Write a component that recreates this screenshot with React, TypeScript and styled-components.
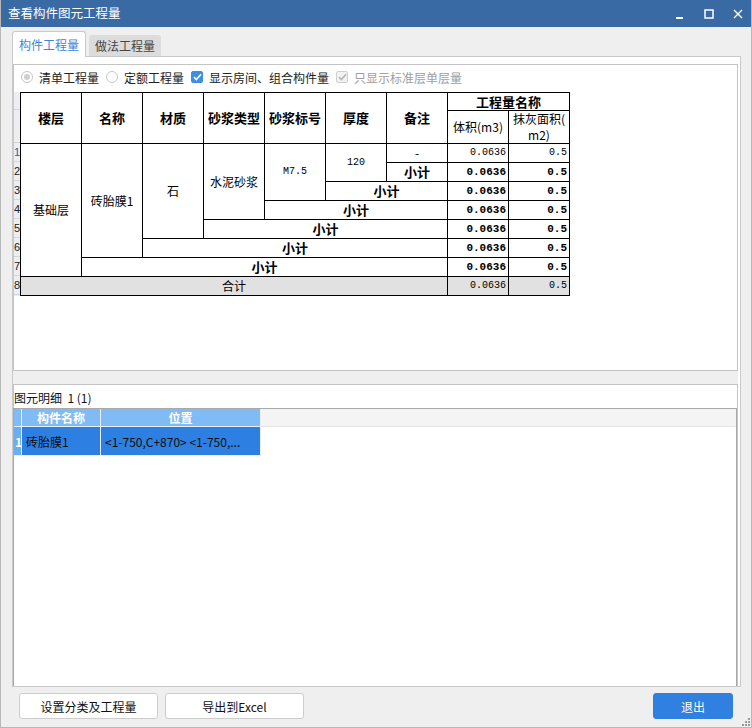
import * as React from "react";
import styled, { createGlobalStyle } from "styled-components";

const GlobalStyle = createGlobalStyle`
  html, body {
    margin: 0;
    padding: 0;
    background: #efefef;
  }
  * {
    box-sizing: border-box;
  }
`;

const CJK = `"Noto Sans CJK SC", "Noto Sans", sans-serif`;
const MONO = `"Liberation Mono", "DejaVu Sans Mono", monospace`;

const Window = styled.div`
  width: 752px;
  height: 728px;
  display: flex;
  flex-direction: column;
  background: #efefef;
  border: 1px solid #b8b8b8;
  border-top: none;
  font-family: ${CJK};
  font-size: 12px;
  color: #111;
  position: relative;
  overflow: hidden;
`;

const TitleBar = styled.div`
  height: 27px;
  flex: none;
  display: flex;
  align-items: center;
  background: #3a6aa4;
  color: #fff;
  padding-left: 8px;
  margin: 0 -1px;
`;

const TitleText = styled.div`
  flex: 1;
  font-size: 12.5px;
  line-height: 1;
`;

const TitleButton = styled.div`
  width: 29px;
  height: 27px;
  display: flex;
  align-items: center;
  justify-content: center;
`;

const Body = styled.div`
  flex: 1;
  display: flex;
  flex-direction: column;
  padding: 4px 10px 0 11px;
`;

const TabBar = styled.div`
  height: 26px;
  display: flex;
  align-items: flex-end;
  margin-bottom: -1px;
  position: relative;
  z-index: 1;
`;

const Tab = styled.div<{ $active?: boolean }>`
  display: flex;
  align-items: center;
  justify-content: center;
  border-radius: 3px 3px 0 0;
  font-size: 12px;
  ${(p) =>
    p.$active
      ? `
    width: 74px;
    height: 26px;
    background: #fff;
    color: #3b86db;
    border: 1px solid #c9c9c9;
    border-bottom: none;
  `
      : `
    width: 72px;
    height: 21px;
    margin-left: 3px;
    margin-bottom: 1px;
    background: #dcdcdc;
    color: #444;
  `}
`;

const TabPage = styled.div`
  height: 631px;
  flex: none;
  display: flex;
  flex-direction: column;
  background: #fff;
  border: 1px solid #c9c9c9;
  padding: 7px 2px 0 0;
`;

const UpperPanel = styled.div`
  height: 307px;
  flex: none;
  border: 1px solid #c4c4c4;
  display: flex;
  flex-direction: column;
`;

const OptionsRow = styled.div`
  height: 27px;
  flex: none;
  display: flex;
  align-items: center;
  padding-left: 7px;
  padding-bottom: 3px;
`;

const Option = styled.label<{ $disabled?: boolean }>`
  display: flex;
  align-items: center;
  gap: 6px;
  margin-right: 7px;
  color: ${(p) => (p.$disabled ? "#a0a0a0" : "#222")};
  font-size: 12px;
`;

const Radio = styled.span<{ $checked?: boolean }>`
  width: 12px;
  height: 12px;
  border-radius: 50%;
  border: 1px solid #c6c6c6;
  background: #fff;
  display: flex;
  align-items: center;
  justify-content: center;
  &::after {
    content: "";
    width: 6px;
    height: 6px;
    border-radius: 50%;
    background: ${(p) => (p.$checked ? "#cfcfcf" : "transparent")};
  }
`;

const Check = styled.span<{ $disabled?: boolean }>`
  width: 12px;
  height: 12px;
  border-radius: 2px;
  display: flex;
  align-items: center;
  justify-content: center;
  background: ${(p) => (p.$disabled ? "#f2f2f2" : "#3d8ee8")};
  border: 1px solid ${(p) => (p.$disabled ? "#cfcfcf" : "#3d8ee8")};
`;

const GridArea = styled.div`
  display: flex;
`;

const RowHeader = styled.div`
  width: 7px;
  flex: none;
  display: flex;
  flex-direction: column;
  background: #eceef2;
  border-left: 1px solid #c8c8c8;
  margin-left: -1px;
  position: relative;
  z-index: 1;
`;

const RowNum = styled.div<{ $h: number; $blue?: boolean }>`
  height: ${(p) => p.$h}px;
  border-bottom: 1px solid #d6d6d6;
  font-family: "Liberation Sans", sans-serif;
  font-size: 11px;
  line-height: ${(p) => p.$h}px;
  color: ${(p) => (p.$blue ? "#2a5ca8" : "#222")};
  overflow: visible;
  white-space: nowrap;
`;

const Sheet = styled.table`
  border-collapse: collapse;
  table-layout: fixed;
  width: 550px;
  font-family: ${CJK};
`;

const Col = styled.col`
  width: 61px;
`;

const Row = styled.tr<{ $h: number; $gray?: boolean }>`
  height: ${(p) => p.$h}px;
  background: ${(p) => (p.$gray ? "#e1e1e1" : "#fff")};
`;

const Head = styled.th<{ $thin?: boolean }>`
  border: 1px solid #000;
  padding: 0;
  font-size: ${(p) => (p.$thin ? "12px" : "13px")};
  font-weight: ${(p) => (p.$thin ? 400 : 700)};
  line-height: 16px;
  text-align: center;
  vertical-align: middle;
  color: #000;
  white-space: nowrap;
`;

const Cell = styled.td<{ $bold?: boolean; $mono?: boolean }>`
  border: 1px solid #000;
  padding: 0 2px;
  text-align: center;
  vertical-align: middle;
  line-height: 16px;
  white-space: nowrap;
  overflow: hidden;
  color: #000;
  font-family: ${(p) => (p.$mono ? MONO : CJK)};
  font-size: ${(p) => (p.$mono ? "10px" : p.$bold ? "13px" : "12px")};
  font-weight: ${(p) => (p.$bold ? 700 : 400)};
`;

const Num = styled.td<{ $bold?: boolean }>`
  border: 1px solid #000;
  padding: 0 2px 0 0;
  text-align: right;
  vertical-align: middle;
  line-height: 16px;
  color: #000;
  font-family: ${MONO};
  font-size: ${(p) => (p.$bold ? "11px" : "10px")};
  font-weight: ${(p) => (p.$bold ? 700 : 400)};
`;

const Splitter = styled.div`
  height: 13px;
  flex: none;
  background: #efefef;
`;

const LowerPanel = styled.div`
  flex: 1;
  display: flex;
  flex-direction: column;
  border: 1px solid #c4c4c4;
  border-bottom: none;
`;

const PanelLabel = styled.div`
  height: 23px;
  flex: none;
  display: flex;
  align-items: center;
  font-size: 12px;
  color: #111;
  padding-top: 1px;
`;

const DetailGrid = styled.div`
  flex: 1;
  display: flex;
  flex-direction: column;
  border: 1px solid #a9a9a9;
  border-bottom: none;
  margin-left: -1px;
`;

const GridRow = styled.div<{ $h: number }>`
  height: ${(p) => p.$h}px;
  display: flex;
`;

const GridCell = styled.div<{ $w?: number; $kind: "head" | "sel" | "num" | "numSel" | "blank" | "blankHead" }>`
  ${(p) => (p.$w ? `width: ${p.$w}px; flex: none;` : "flex: 1;")}
  display: flex;
  align-items: center;
  overflow: hidden;
  white-space: nowrap;
  font-size: 12px;
  border-right: 1px solid ${(p) => (p.$kind === "blank" || p.$kind === "blankHead" ? "transparent" : "#e6f1fc")};
  border-bottom: 1px solid ${(p) => (p.$kind === "blank" ? "transparent" : "#e6f1fc")};
  ${(p) => {
    switch (p.$kind) {
      case "head":
        return `background: #80bbf5; color: #fff; font-weight: 700; justify-content: center;`;
      case "sel":
        return `background: #2d80e2; color: #0c0c0c; padding-left: 4px;`;
      case "num":
        return `background: #80bbf5; color: #fff;`;
      case "numSel":
        return `background: #6aaef2; color: #fff; font-weight: 700; padding-left: 1px;`;
      case "blankHead":
        return `background: #f4f4f4; border-bottom-color: #e4e4e4;`;
      default:
        return `background: #fff;`;
    }
  }}
`;

const Footer = styled.div`
  height: 40px;
  flex: none;
  display: flex;
  align-items: flex-start;
  padding: 6px 8px 0 7px;
  gap: 7px;
`;

const Button = styled.div<{ $primary?: boolean }>`
  width: ${(p) => (p.$primary ? 80 : 139)}px;
  height: 26px;
  display: flex;
  align-items: center;
  justify-content: center;
  border-radius: 3px;
  font-size: 12px;
  background: ${(p) => (p.$primary ? "#2f80e0" : "#fff")};
  color: ${(p) => (p.$primary ? "#fff" : "#111")};
  border: 1px solid ${(p) => (p.$primary ? "#2f80e0" : "#cdcdcd")};
  ${(p) => (p.$primary ? "margin-left: auto;" : "")}
`;

const Grip = styled.svg`
  position: absolute;
  right: 1px;
  bottom: 1px;
`;

const CheckMark = ({ color }: { color: string }) => (
  <svg width="9" height="8" viewBox="0 0 9 8">
    <path d="M1 4.2 L3.4 6.5 L8 1.2" fill="none" stroke={color} strokeWidth="1.6" />
  </svg>
);

const subtotalRows = [2, 3, 4, 5, 6];

export default function App() {
  return (
    <>
      <GlobalStyle />
      <Window>
        <TitleBar>
          <TitleText>查看构件图元工程量</TitleText>
          <TitleButton>
            <svg width="10" height="10" viewBox="0 0 10 10">
              <rect x="1" y="8" width="7" height="2" fill="#fff" />
            </svg>
          </TitleButton>
          <TitleButton>
            <svg width="10" height="10" viewBox="0 0 10 10">
              <rect x="1" y="1" width="8" height="8" fill="none" stroke="#fff" strokeWidth="1.5" />
            </svg>
          </TitleButton>
          <TitleButton>
            <svg width="10" height="10" viewBox="0 0 10 10">
              <path d="M1 1 L9 9 M9 1 L1 9" stroke="#fff" strokeWidth="1.4" />
            </svg>
          </TitleButton>
        </TitleBar>

        <Body>
          <TabBar>
            <Tab $active>构件工程量</Tab>
            <Tab>做法工程量</Tab>
          </TabBar>

          <TabPage>
            <UpperPanel>
              <OptionsRow>
                <Option>
                  <Radio $checked />
                  清单工程量
                </Option>
                <Option>
                  <Radio />
                  定额工程量
                </Option>
                <Option>
                  <Check>
                    <CheckMark color="#fff" />
                  </Check>
                  显示房间、组合构件量
                </Option>
                <Option $disabled>
                  <Check $disabled>
                    <CheckMark color="#b5b5b5" />
                  </Check>
                  只显示标准层单层量
                </Option>
              </OptionsRow>

              <GridArea>
                <RowHeader>
                  <RowNum $h={18} />
                  <RowNum $h={33} />
                  {[1, 2, 3, 4, 5, 6, 7, 8].map((n) => (
                    <RowNum key={n} $h={19} $blue={n === 1}>
                      {n}
                    </RowNum>
                  ))}
                </RowHeader>

                <Sheet>
                  <colgroup>
                    {Array.from({ length: 9 }).map((_, i) => (
                      <Col key={i} />
                    ))}
                  </colgroup>
                  <thead>
                    <Row $h={18}>
                      <Head rowSpan={2}>楼层</Head>
                      <Head rowSpan={2}>名称</Head>
                      <Head rowSpan={2}>材质</Head>
                      <Head rowSpan={2}>砂浆类型</Head>
                      <Head rowSpan={2}>砂浆标号</Head>
                      <Head rowSpan={2}>厚度</Head>
                      <Head rowSpan={2}>备注</Head>
                      <Head colSpan={2}>工程量名称</Head>
                    </Row>
                    <Row $h={33}>
                      <Head $thin>体积(m3)</Head>
                      <Head $thin>
                        抹灰面积(
                        <br />
                        m2)
                      </Head>
                    </Row>
                  </thead>
                  <tbody>
                    <Row $h={19}>
                      <Cell rowSpan={7}>基础层</Cell>
                      <Cell rowSpan={6}>砖胎膜1</Cell>
                      <Cell rowSpan={5}>石</Cell>
                      <Cell rowSpan={4}>水泥砂浆</Cell>
                      <Cell rowSpan={3} $mono>
                        M7.5
                      </Cell>
                      <Cell rowSpan={2} $mono>
                        120
                      </Cell>
                      <Cell>-</Cell>
                      <Num>0.0636</Num>
                      <Num>0.5</Num>
                    </Row>
                    {subtotalRows.map((r, i) => (
                      <Row key={r} $h={19}>
                        <Cell $bold colSpan={i + 1}>
                          小计
                        </Cell>
                        <Num $bold>0.0636</Num>
                        <Num $bold>0.5</Num>
                      </Row>
                    ))}
                    <Row $h={19}>
                      <Cell $bold colSpan={6}>
                        小计
                      </Cell>
                      <Num $bold>0.0636</Num>
                      <Num $bold>0.5</Num>
                    </Row>
                    <Row $h={19} $gray>
                      <Cell colSpan={7}>合计</Cell>
                      <Num>0.0636</Num>
                      <Num>0.5</Num>
                    </Row>
                  </tbody>
                </Sheet>
              </GridArea>
            </UpperPanel>

            <Splitter />

            <LowerPanel>
              <PanelLabel>图元明细&nbsp;&nbsp;1 (1)</PanelLabel>
              <DetailGrid>
                <GridRow $h={18}>
                  <GridCell $w={8} $kind="num" />
                  <GridCell $w={79} $kind="head">
                    构件名称
                  </GridCell>
                  <GridCell $w={160} $kind="head">
                    位置
                  </GridCell>
                  <GridCell $kind="blankHead" />
                </GridRow>
                <GridRow $h={29}>
                  <GridCell $w={8} $kind="numSel">
                    1
                  </GridCell>
                  <GridCell $w={79} $kind="sel">
                    砖胎膜1
                  </GridCell>
                  <GridCell $w={160} $kind="sel">
                    &lt;1-750,C+870&gt; &lt;1-750,...
                  </GridCell>
                  <GridCell $kind="blank" />
                </GridRow>
              </DetailGrid>
            </LowerPanel>
          </TabPage>

          <Footer>
            <Button>设置分类及工程量</Button>
            <Button>导出到Excel</Button>
            <Button $primary>退出</Button>
          </Footer>
        </Body>

        <Grip width="8" height="8" viewBox="0 0 8 8">
          <rect x="6" y="0" width="2" height="2" fill="#9a9a9a" />
          <rect x="3" y="3" width="2" height="2" fill="#9a9a9a" />
          <rect x="6" y="3" width="2" height="2" fill="#9a9a9a" />
          <rect x="0" y="6" width="2" height="2" fill="#9a9a9a" />
          <rect x="3" y="6" width="2" height="2" fill="#9a9a9a" />
          <rect x="6" y="6" width="2" height="2" fill="#9a9a9a" />
        </Grip>
      </Window>
    </>
  );
}
